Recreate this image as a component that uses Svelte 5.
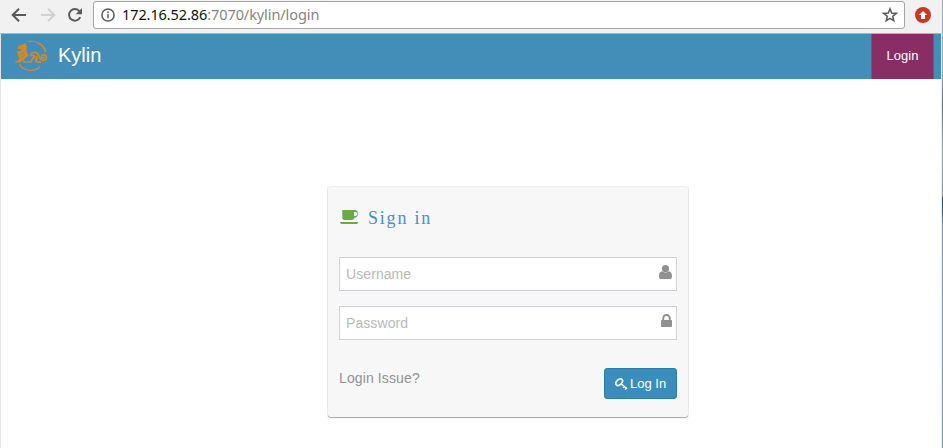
<script>
  let username = $state('');
  let password = $state('');
</script>

<div class="window">
  <header class="toolbar">
    <svg class="back" width="16" height="16" viewBox="0 0 16 16"><path d="M15 8H2M8 1.7 1.7 8 8 14.3" /></svg>
    <svg class="forward" width="16" height="16" viewBox="0 0 16 16"><path d="M1 8h13M8 1.7 14.3 8 8 14.3" /></svg>
    <svg class="reload" width="16" height="16" viewBox="0 0 16 16"><path d="M13.2 10.2A5.8 5.8 0 1 1 12.5 4.3" /><path class="tip" d="M15 1v6.3H8.7z" /></svg>
    <div class="address">
      <svg class="info" width="14" height="14" viewBox="0 0 14 14"><circle cx="7" cy="7" r="6.1" /><path d="M7 6.2v4M7 3.5v1.7" /></svg>
      <span class="url">172.16.52.86<i>:7070/kylin/login</i></span>
      <svg class="star" width="16" height="16" viewBox="0 0 16 16"><path d="m8 1.9 1.7 4.2 4.5.3-3.5 2.9 1.1 4.4L8 11.3l-3.8 2.4 1.1-4.4-3.5-2.9 4.5-.3z" /></svg>
    </div>
    <svg class="ext" width="16" height="16" viewBox="0 0 16 16"><circle cx="8" cy="8" r="8" fill="#c93727" /><path d="m8 3.9 4 4.2h-2V12H6V8.100H4z" fill="#fff" /></svg>
  </header>

  <div class="page">
    <nav>
      <svg class="logo" width="36" height="32" viewBox="0 0 36 32">
        <g fill="#d28a27">
          <path d="M3.500 8.500 5 5.200l1.700.600L9 3.700l.6 1.100L11.200 2.500l.7 2.700 1.200 1-.7 1.800.8 1.800-1.500.8 1.600 1.200-.4 1.500 1.400.8-.3 2.200-2.500 1.500-2 2.500 1.500 1h4v1.200H9.500l-1-1.900-1.500.9.500 1H1l.3-1 2.400-.9 2-2.700L4 16.500 4.500 14 3 13l1.200-2.300 1.900.5 1.600-1.400-1.500-.6z" />
        </g>
        <path d="m6.500 14.500 3.500-2M7.500 17l3.200-1.700" fill="none" stroke="#438eb9" stroke-width=".7" />
        <g fill="none" stroke="#d28a27" stroke-linecap="round">
          <path d="M15 1.300C23 .2 30.300 5 31.700 11.500" stroke-width="1" />
          <path d="M24 2.900c3.700 1.800 6.500 4.900 7.500 8.600" stroke-width="1.500" />
          <path d="M5.500 24.500c3.800 6.300 14 7.900 20 2.800" stroke-width="1.300" />
          <path d="M17 13.700c2.200-2 5.500-1.800 6.900.3 1 1.600.9 2.800 2.200 4.800 1.900 2.600 6.400 1.900 6.400-1.200 0-3.200-4.700-3.600-5.100-1.100-.2 1.900 2.300 2.200 2.600.8" stroke-width="1.700" />
          <path d="M16.500 15.500h3.500l.5 1.700-2 1.300-1.400 3.400h-1.600M22.500 16.500l.5 2-1.500 1.700 1.700 1.900h3.200" stroke-width="1.700" />
        </g>
      </svg>
      <span class="brand">Kylin</span>
      <a class="login" href="#login">Login</a>
    </nav>

    <main>
      <form class="card" onsubmit={(event) => event.preventDefault()}>
        <h4>
          <svg width="19" height="15" viewBox="0 0 19 15"><path fill="#69aa46" fill-rule="evenodd" d="M2.300 0h12.800a4 4 0 0 1 0 7.700h-.6A2.900 2.900 0 0 1 11.700 10H5.100a2.800 2.800 0 0 1-2.800-2.800zm11.700 1.900v4h1c3.200 0 3.200-4 0-4zM0 12h18.300c-.2 1.400-1.200 2-2.500 2H2.400C1 14 .2 13.400 0 12" /></svg>
          <span>Sign in</span>
        </h4>
        <label class="field">
          <input type="text" placeholder="Username" bind:value={username} />
          <svg width="13" height="14" viewBox="0 0 13 14"><circle cx="6.500" cy="3.600" r="3.600" /><path d="M3.200 6.300c2 1.700 4.600 1.700 6.600 0 2.300.1 3.200 2.500 3.200 5.100 0 1.600-.9 2.600-2.300 2.600H2.300C.9 14 0 13 0 11.400c0-2.600.9-5 3.200-5.100z" /></svg>
        </label>
        <label class="field">
          <input type="password" placeholder="Password" bind:value={password} />
          <svg width="11" height="13" viewBox="0 0 11 13"><path fill-rule="evenodd" d="M1.300 6V4.200a4.200 4.200 0 0 1 8.400 0V6h.5q.8 0 .8.800v5.400q0 .8-.8.800H.8q-.8 0-.8-.8V6.800Q0 6 .8 6zM3.200 6h4.600V4.200a2.300 2.300 0 0 0-4.600 0z" /></svg>
        </label>
        <div class="actions">
          <span class="issue">Login Issue?</span>
          <button type="submit">
            <svg width="13" height="12" viewBox="0 0 13 12"><g fill="none" stroke="#fff"><ellipse cx="4.200" cy="4.200" rx="2.500" ry="3.900" transform="rotate(45 4.200 4.200)" stroke-width="1.600" /><path d="m6 5.700 5.600 4.700M8 9.900l1.700-1.900M10.100 11.500l1.700-1.800" stroke-width="1.400" /></g></svg>
            Log In
          </button>
        </div>
      </form>
    </main>
  </div>
  <aside></aside>
</div>

<style>
  .window {
    position: relative;
    width: 943px;
    height: 448px;
    overflow: hidden;
    background: #fff;
    font-family: "Liberation Sans", Arial, sans-serif;
  }
  .window * { box-sizing: border-box; }
  svg { display: block; flex: none; }

  .toolbar {
    display: flex;
    align-items: flex-start;
    height: 34px;
    padding: 1px 11px 0;
    background: #f2f1f2;
    border-bottom: 1px solid #b3b1b1;
  }
  .toolbar > svg { margin-top: 6px; fill: none; stroke: #5a5a5a; stroke-width: 2; }
  .toolbar .forward { margin-left: 13px; stroke: #d0d0d0; }
  .toolbar .reload { margin-left: 11px; }
  .toolbar .reload .tip { fill: #5a5a5a; stroke: none; }
  .toolbar .ext { margin-left: 10px; stroke: none; }
  .address {
    display: flex;
    align-items: center;
    width: 812px;
    height: 28px;
    margin-left: 10px;
    padding: 0 6px 0 7px;
    background: #fff;
    border: 1px solid #a6a6a6;
    border-radius: 3px;
  }
  .info, .star { fill: none; stroke: #5a5a5a; stroke-width: 1.5; }
  .url {
    margin: -2px auto 0 7px;
    color: #111;
    font: 14.5px/20px "Noto Sans", "Open Sans", sans-serif;
    letter-spacing: -0.09px;
    white-space: nowrap;
  }
  .url i { color: #858585; font-style: normal; }

  .page { height: 414px; margin-right: 2px; border-left: 1px solid #e4e4e4; }
  nav {
    display: flex;
    height: 45px;
    padding: 0 7px 0 13px;
    color: #fff;
    background: #438eb9;
  }
  .logo { margin-top: 6px; }
  .brand { margin-left: 8px; font-size: 20px; line-height: 42px; }
  .login {
    width: 63px;
    margin-left: auto;
    border: solid #347395;
    border-width: 0 1px;
    color: #fff;
    background: #892e65;
    font-size: 13px;
    line-height: 44px;
    text-align: center;
    text-decoration: none;
  }
  main { display: flex; padding: 108px 0 0 327px; }
  .card {
    width: 360px;
    height: 230px;
    padding: 20px 11px 0;
    background: #f7f7f7;
    border-radius: 3px;
    box-shadow: 0 0 1px 1px rgba(0, 0, 0, 0.07), 0 1px 1px rgba(0, 0, 0, 0.3);
  }
  h4 {
    display: flex;
    align-items: center;
    height: 22px;
    margin: 0 0 28px;
    padding-left: 1px;
    color: #478fca;
    font: 18px/22px "Liberation Serif", serif;
    letter-spacing: 1.8px;
  }
  h4 svg { margin-bottom: 2px; }
  h4 span { margin-left: 9px; }
  .field { position: relative; display: block; height: 34px; margin-bottom: 15px; }
  input {
    display: block;
    width: 338px;
    height: 34px;
    padding: 0 6px;
    border: 1px solid #d0d3de;
    border-radius: 0;
    outline: 0;
    background: #fff;
    color: #858585;
    font: 14px "Liberation Sans", Arial, sans-serif;
    letter-spacing: 0.08px;
  }
  input::placeholder { color: #b9b9b9; opacity: 1; }
  .field svg { position: absolute; top: 8px; right: 5px; fill: #909090; }
  .actions { display: flex; justify-content: space-between; padding-top: 13px; }
  .issue { color: #939393; font-size: 14px; line-height: 20px; letter-spacing: 0.12px; }
  button {
    display: flex;
    align-items: center;
    gap: 2px;
    width: 73px;
    height: 31px;
    padding: 0 0 0 10px;
    border: 1px solid #2d7da9;
    border-radius: 3px;
    background: #3b8dbd;
    color: #fff;
    font: 13px "Liberation Sans", Arial, sans-serif;
    white-space: nowrap;
  }
  aside {
    position: absolute;
    top: 0;
    right: 0;
    width: 2px;
    height: 448px;
    border-left: 1px solid #e9edf0;
    background: linear-gradient(#a2b2c4 0, #9ba9b8 70px, #686f77 105px, #a3aaae 150px, #8d969f 196px, #29547c 198px, #34587c 210px, #8799b0 225px, #809bbb 100%);
  }
</style>
